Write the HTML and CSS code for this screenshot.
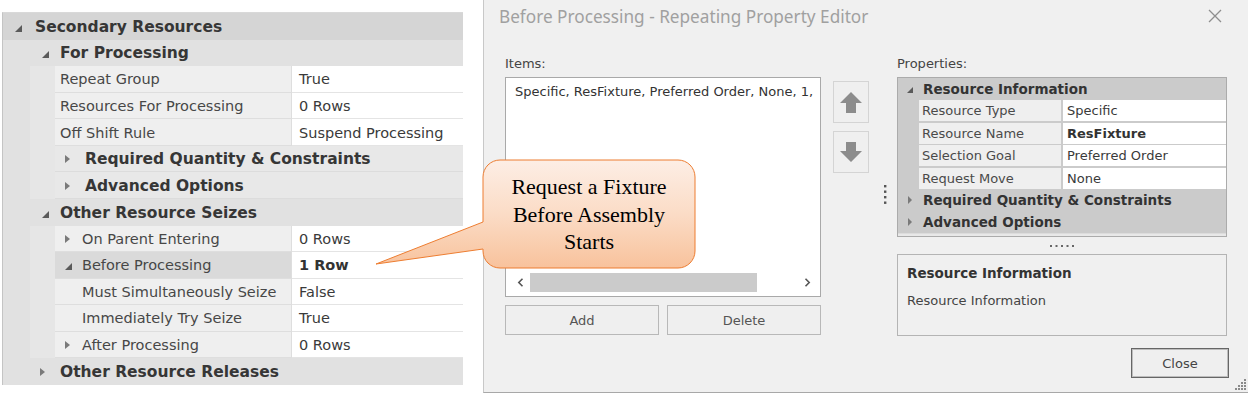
FILE: index.html
```html
<!DOCTYPE html>
<html>
<head>
<meta charset="utf-8">
<link rel="stylesheet" href="styles.css">
</head>
<body>
<div class="page">
  <div class="pg">
    <div class="row c0"><i class="tri-exp"></i><span>Secondary Resources</span></div>
    <div class="row ind1"><div class="cell c1"><i class="tri-exp"></i><span>For Processing</span></div></div>
    <div class="row ind2"><div class="lbl">Repeat Group</div><div class="val">True</div></div>
    <div class="row ind2"><div class="lbl">Resources For Processing</div><div class="val">0 Rows</div></div>
    <div class="row ind2"><div class="lbl">Off Shift Rule</div><div class="val">Suspend Processing</div></div>
    <div class="row ind2"><div class="cell c2"><i class="tri-col"></i><span>Required Quantity &amp; Constraints</span></div></div>
    <div class="row ind2"><div class="cell c2"><i class="tri-col"></i><span>Advanced Options</span></div></div>
    <div class="row ind1"><div class="cell c1"><i class="tri-exp"></i><span>Other Resource Seizes</span></div></div>
    <div class="row ind2"><div class="lbl tog"><i class="tri-col"></i>On Parent Entering</div><div class="val">0 Rows</div></div>
    <div class="row ind2"><div class="lbl tog sel"><i class="tri-exp"></i>Before Processing</div><div class="val strong">1 Row</div></div>
    <div class="row ind2"><div class="lbl sub">Must Simultaneously Seize</div><div class="val">False</div></div>
    <div class="row ind2"><div class="lbl sub">Immediately Try Seize</div><div class="val">True</div></div>
    <div class="row ind2"><div class="lbl tog"><i class="tri-col"></i>After Processing</div><div class="val">0 Rows</div></div>
    <div class="row ind1"><div class="cell c1"><i class="tri-col"></i><span>Other Resource Releases</span></div></div>
  </div>

  <div class="dialog">
    <div class="titlebar">
      <span class="title">Before Processing - Repeating Property Editor</span>
      <svg class="xbtn" width="14" height="14" viewBox="0 0 14 14"><path d="M1 1L13 13M13 1L1 13" stroke="#8e8e8e" stroke-width="1.3" fill="none"/></svg>
    </div>
    <div class="dbody">
      <div class="col-items">
        <div class="cap">Items:</div>
        <div class="listbox">
          <div class="list-content">Specific, ResFixture, Preferred Order, None, 1,</div>
          <div class="hscroll">
            <svg width="7" height="9" viewBox="0 0 7 9"><path d="M5.5 0.8L1.8 4.5L5.5 8.2" stroke="#555" stroke-width="1.6" fill="none"/></svg>
            <div class="thumb"></div>
            <svg class="chev-r" width="7" height="9" viewBox="0 0 7 9"><path d="M1.5 0.8L5.2 4.5L1.5 8.2" stroke="#555" stroke-width="1.6" fill="none"/></svg>
          </div>
        </div>
        <div class="btnrow"><div class="btn">Add</div><div class="btn">Delete</div></div>
      </div>
      <div class="col-move">
        <div class="mv"><svg width="22" height="21" viewBox="0 0 22 21"><path d="M11 0L22 11H16V21H6V11H0Z" fill="#8c8c8c"/></svg></div>
        <div class="mv"><svg width="22" height="20" viewBox="0 0 22 20"><path d="M6 0H16V9H22L11 20L0 9H6Z" fill="#8c8c8c"/></svg></div>
        <svg class="vdots" width="3" height="20" viewBox="0 0 3 20"><g fill="#555"><rect x="0" y="0" width="2.4" height="2.4"/><rect x="0" y="5.5" width="2.4" height="2.4"/><rect x="0" y="11" width="2.4" height="2.4"/><rect x="0" y="16.5" width="2.4" height="2.4"/></g></svg>
      </div>
      <div class="col-props">
        <div class="cap">Properties:</div>
        <div class="pgrid">
          <div class="pg-hdr"><i class="tri-exp s"></i>Resource Information</div>
          <div class="pg-row"><div class="pg-lbl">Resource Type</div><div class="pg-val">Specific</div></div>
          <div class="pg-row"><div class="pg-lbl">Resource Name</div><div class="pg-val b">ResFixture</div></div>
          <div class="pg-row"><div class="pg-lbl">Selection Goal</div><div class="pg-val">Preferred Order</div></div>
          <div class="pg-row"><div class="pg-lbl">Request Move</div><div class="pg-val">None</div></div>
          <div class="pg-cat"><i class="tri-col s"></i>Required Quantity &amp; Constraints</div>
          <div class="pg-cat"><i class="tri-col s"></i>Advanced Options</div>
          <div class="pg-foot"></div>
        </div>
        <div class="hdots"><svg width="24" height="2" viewBox="0 0 24 2"><g fill="#666"><rect x="0" y="0" width="2" height="2"/><rect x="5.5" y="0" width="2" height="2"/><rect x="11" y="0" width="2" height="2"/><rect x="16.5" y="0" width="2" height="2"/><rect x="22" y="0" width="2" height="2"/></g></svg></div>
        <div class="desc">
          <div class="desc-t">Resource Information</div>
          <div class="desc-b">Resource Information</div>
        </div>
        <div class="closebtn">Close</div>
      </div>
    </div>
    <div class="griprow"><svg width="12" height="12" viewBox="0 0 12 12"><g fill="#8a8a8a"><rect x="9" y="0" width="2" height="2"/><rect x="6" y="3" width="2" height="2"/><rect x="9" y="3" width="2" height="2"/><rect x="3" y="6" width="2" height="2"/><rect x="6" y="6" width="2" height="2"/><rect x="9" y="6" width="2" height="2"/><rect x="0" y="9" width="2" height="2"/><rect x="3" y="9" width="2" height="2"/><rect x="6" y="9" width="2" height="2"/><rect x="9" y="9" width="2" height="2"/></g></svg></div>
  </div>
</div>

<div class="callout">
  <svg width="322" height="111" viewBox="0 0 322 111">
    <defs>
      <linearGradient id="cg" x1="0" y1="0" x2="0" y2="1">
        <stop offset="0" stop-color="#fdeee5"/>
        <stop offset="0.5" stop-color="#fbdcc6"/>
        <stop offset="1" stop-color="#f8c29c"/>
      </linearGradient>
    </defs>
    <path d="M125 1H303A17 17 0 0 1 320 18V92A17 17 0 0 1 303 109H125A17 17 0 0 1 108 92V90L1 105L108 63V18A17 17 0 0 1 125 1Z" fill="url(#cg)" stroke="#ed7d31" stroke-width="1"/>
  </svg>
  <div class="callout-text">Request a Fixture<br>Before Assembly<br>Starts</div>
</div>
</body>
</html>
```

FILE: styles.css
```css
* { box-sizing: border-box; }
html, body { margin: 0; padding: 0; }
body {
  width: 1248px;
  height: 395px;
  overflow: hidden;
  background: #fff;
  font-family: "DejaVu Sans", Verdana, sans-serif;
  position: relative;
}
.page { display: flex; align-items: flex-start; }

/* ---------- left property grid ---------- */
.pg {
  margin: 12px 0 0 2px;
  width: 461px;
  border-left: 1px solid #c4c4c4;
  border-top: 1px solid #d9d9d9;
  background: #e1e1e1;
  flex: none;
}
.row { display: flex; height: 26.57px; padding-top: 1px; }
.c0 {
  background: #d5d5d5;
  align-items: center;
  padding-left: 12px;
  font-weight: bold;
  font-size: 15.5px;
  color: #363636;
}
.c0 .tri-exp { margin-right: 13px; }
.ind1 { padding-left: 27px; padding-top: 0; }
.ind2 {
  padding-left: 52px;
  padding-top: 0;
  background: linear-gradient(to right, #e1e1e1 27px, #e6e6e6 27px);
}
.cell {
  flex: 1;
  display: flex;
  align-items: center;
  padding-top: 1px;
  font-weight: bold;
  font-size: 15.5px;
  color: #363636;
}
.c1 { background: #e1e1e1; padding-left: 12px; }
.c1 .tri-exp { margin-right: 11px; }
.c1 .tri-col { margin-left: -2px; margin-right: 15px; }
.c2 { background: #e8e8e8; padding-left: 10px; border-bottom: 1px solid #dcdcdc; }
.c2 .tri-col { margin-right: 15px; }
.lbl {
  width: 237px;
  flex: none;
  display: flex;
  align-items: center;
  padding-left: 5px;
  padding-top: 1px;
  background: #efefef;
  border-bottom: 1px solid #dedede;
  border-right: 1px solid #dedede;
  font-size: 14.5px;
  color: #474747;
  white-space: nowrap;
}
.lbl.tog { padding-left: 10px; }
.lbl.tog .tri-col { margin-right: 12px; }
.lbl.tog .tri-exp { margin-right: 10px; }
.lbl.sub { padding-left: 27px; }
.lbl.sel { background: #dadada; }
.val {
  flex: 1;
  display: flex;
  align-items: center;
  padding-left: 7px;
  padding-top: 1px;
  background: #fff;
  border-bottom: 1px solid #e4e4e4;
  font-size: 14.5px;
  color: #3a3a3a;
  white-space: nowrap;
}
.val.strong { font-weight: bold; color: #333; }

.tri-exp {
  display: block;
  width: 0; height: 0;
  border-left: 7px solid transparent;
  border-bottom: 7px solid #5a5a5a;
  flex: none;
  margin-top: 3px;
}
.tri-col {
  display: block;
  width: 0; height: 0;
  border-top: 4.5px solid transparent;
  border-bottom: 4.5px solid transparent;
  border-left: 5px solid #7a7a7a;
  flex: none;
}
.tri-exp.s { border-left-width: 6px; border-bottom-width: 6px; margin-top: 2px; }
.tri-col.s { border-top-width: 4px; border-bottom-width: 4px; border-left-width: 4.5px; }

/* ---------- dialog ---------- */
.dialog {
  margin-left: 20px;
  width: 765px;
  height: 393px;
  border-left: 1px solid #c8c8c8;
  border-bottom: 1px solid #a8a8a8;
  background: #f0f0f0;
  display: flex;
  flex-direction: column;
  flex: none;
  font-size: 13px;
  color: #3c3c3c;
}
.titlebar {
  height: 32px;
  display: flex;
  align-items: center;
  padding-left: 15px;
  flex: none;
}
.title {
  font-family: "Noto Sans", "Open Sans", sans-serif;
  font-size: 17.2px;
  color: #a0a0a0;
}
.xbtn { margin-left: auto; margin-right: 26px; margin-top: -1px; }
.dbody {
  display: flex;
  padding: 24px 0 0 21px;
}
.cap { height: 16px; line-height: 16px; margin-bottom: 5px; color: #444; }
.col-items { width: 316px; flex: none; }
.listbox {
  height: 220px;
  border: 1px solid #a9a9a9;
  background: #fff;
  display: flex;
  flex-direction: column;
}
.list-content {
  flex: 1;
  padding: 6px 0 0 9px;
  line-height: 16px;
  white-space: nowrap;
  overflow: hidden;
  color: #333;
}
.hscroll {
  height: 19px;
  margin-bottom: 4px;
  display: flex;
  align-items: center;
  padding: 0 9px 0 11px;
}
.hscroll svg { display: block; flex: none; }
.thumb { width: 227px; height: 19px; background: #cbcbcb; margin-left: 6px; }
.chev-r { margin-left: auto; }
.btnrow {
  display: grid;
  grid-template-columns: 1fr 1fr;
  gap: 8px;
  margin-top: 8px;
}
.btn {
  height: 30px;
  border: 1px solid #b8b8b8;
  background: #efefef;
  display: flex;
  align-items: center;
  justify-content: center;
  color: #555;
}
.col-move {
  width: 64px;
  margin-left: 12px;
  padding-top: 25px;
  flex: none;
  display: flex;
  flex-direction: column;
}
.mv {
  width: 36px;
  height: 42px;
  border: 1px solid #d4d4d4;
  background: #efefef;
  display: flex;
  align-items: center;
  justify-content: center;
  margin-bottom: 8px;
}
.vdots { display: block; margin: 4px 0 0 51px; }
.col-props { width: 330px; flex: none; display: flex; flex-direction: column; }
.pgrid {
  height: 160px;
  border: 1px solid #ababab;
  background: #cbcbcb;
  display: flex;
  flex-direction: column;
}
.pg-hdr {
  height: 21px;
  display: flex;
  align-items: center;
  padding-left: 9px;
  font-weight: bold;
  font-size: 13.5px;
  color: #333;
  flex: none;
}
.pg-hdr .tri-exp { margin-right: 10px; }
.pg-row {
  height: 21px;
  margin-top: 1.4px;
  display: flex;
  padding-left: 21px;
  flex: none;
}
.pg-lbl {
  width: 142px;
  background: #efefef;
  padding-left: 3px;
  line-height: 21px;
  color: #4a4a4a;
  white-space: nowrap;
}
.pg-val {
  flex: 1;
  margin-left: 2px;
  background: #fff;
  padding-left: 4px;
  line-height: 21px;
  color: #3a3a3a;
  white-space: nowrap;
}
.pg-val.b { font-weight: bold; color: #333; }
.pg-cat {
  height: 22px;
  display: flex;
  align-items: center;
  padding-left: 10px;
  font-weight: bold;
  font-size: 13.5px;
  color: #333;
  flex: none;
}
.pg-cat:first-of-type { margin-top: 1px; }
.pg-cat .tri-col { margin-right: 11px; }
.pg-foot { flex: 1; background: #e8e8e8; border-top: 1px solid #dcdcdc; }
.hdots { height: 17px; display: flex; align-items: center; justify-content: center; }
.hdots svg { display: block; }
.desc {
  height: 82px;
  border: 1px solid #b4b4b4;
  padding: 10px 9px 0;
}
.desc-t { font-weight: bold; font-size: 13.5px; line-height: 16px; color: #333; }
.desc-b { margin-top: 12px; line-height: 16px; color: #444; }
.closebtn {
  align-self: flex-end;
  margin-right: -2px;
  margin-top: 12px;
  width: 98px;
  height: 30px;
  border: 1px solid #666;
  box-shadow: inset 0 0 0 1px #bdbdbd;
  background: #efefef;
  display: flex;
  align-items: center;
  justify-content: center;
  color: #444;
}
.griprow {
  margin-top: auto;
  display: flex;
  justify-content: flex-end;
  padding: 0 1px 1px 0;
}
.griprow svg { display: block; }

/* ---------- callout ---------- */
.callout {
  position: absolute;
  left: 375px;
  top: 159px;
  width: 322px;
  height: 111px;
}
.callout svg { display: block; }
.callout-text {
  position: absolute;
  left: 108px;
  top: 14px;
  width: 212px;
  text-align: center;
  font-family: "Liberation Serif", "Times New Roman", serif;
  font-size: 22px;
  line-height: 27.5px;
  color: #000;
}
```
